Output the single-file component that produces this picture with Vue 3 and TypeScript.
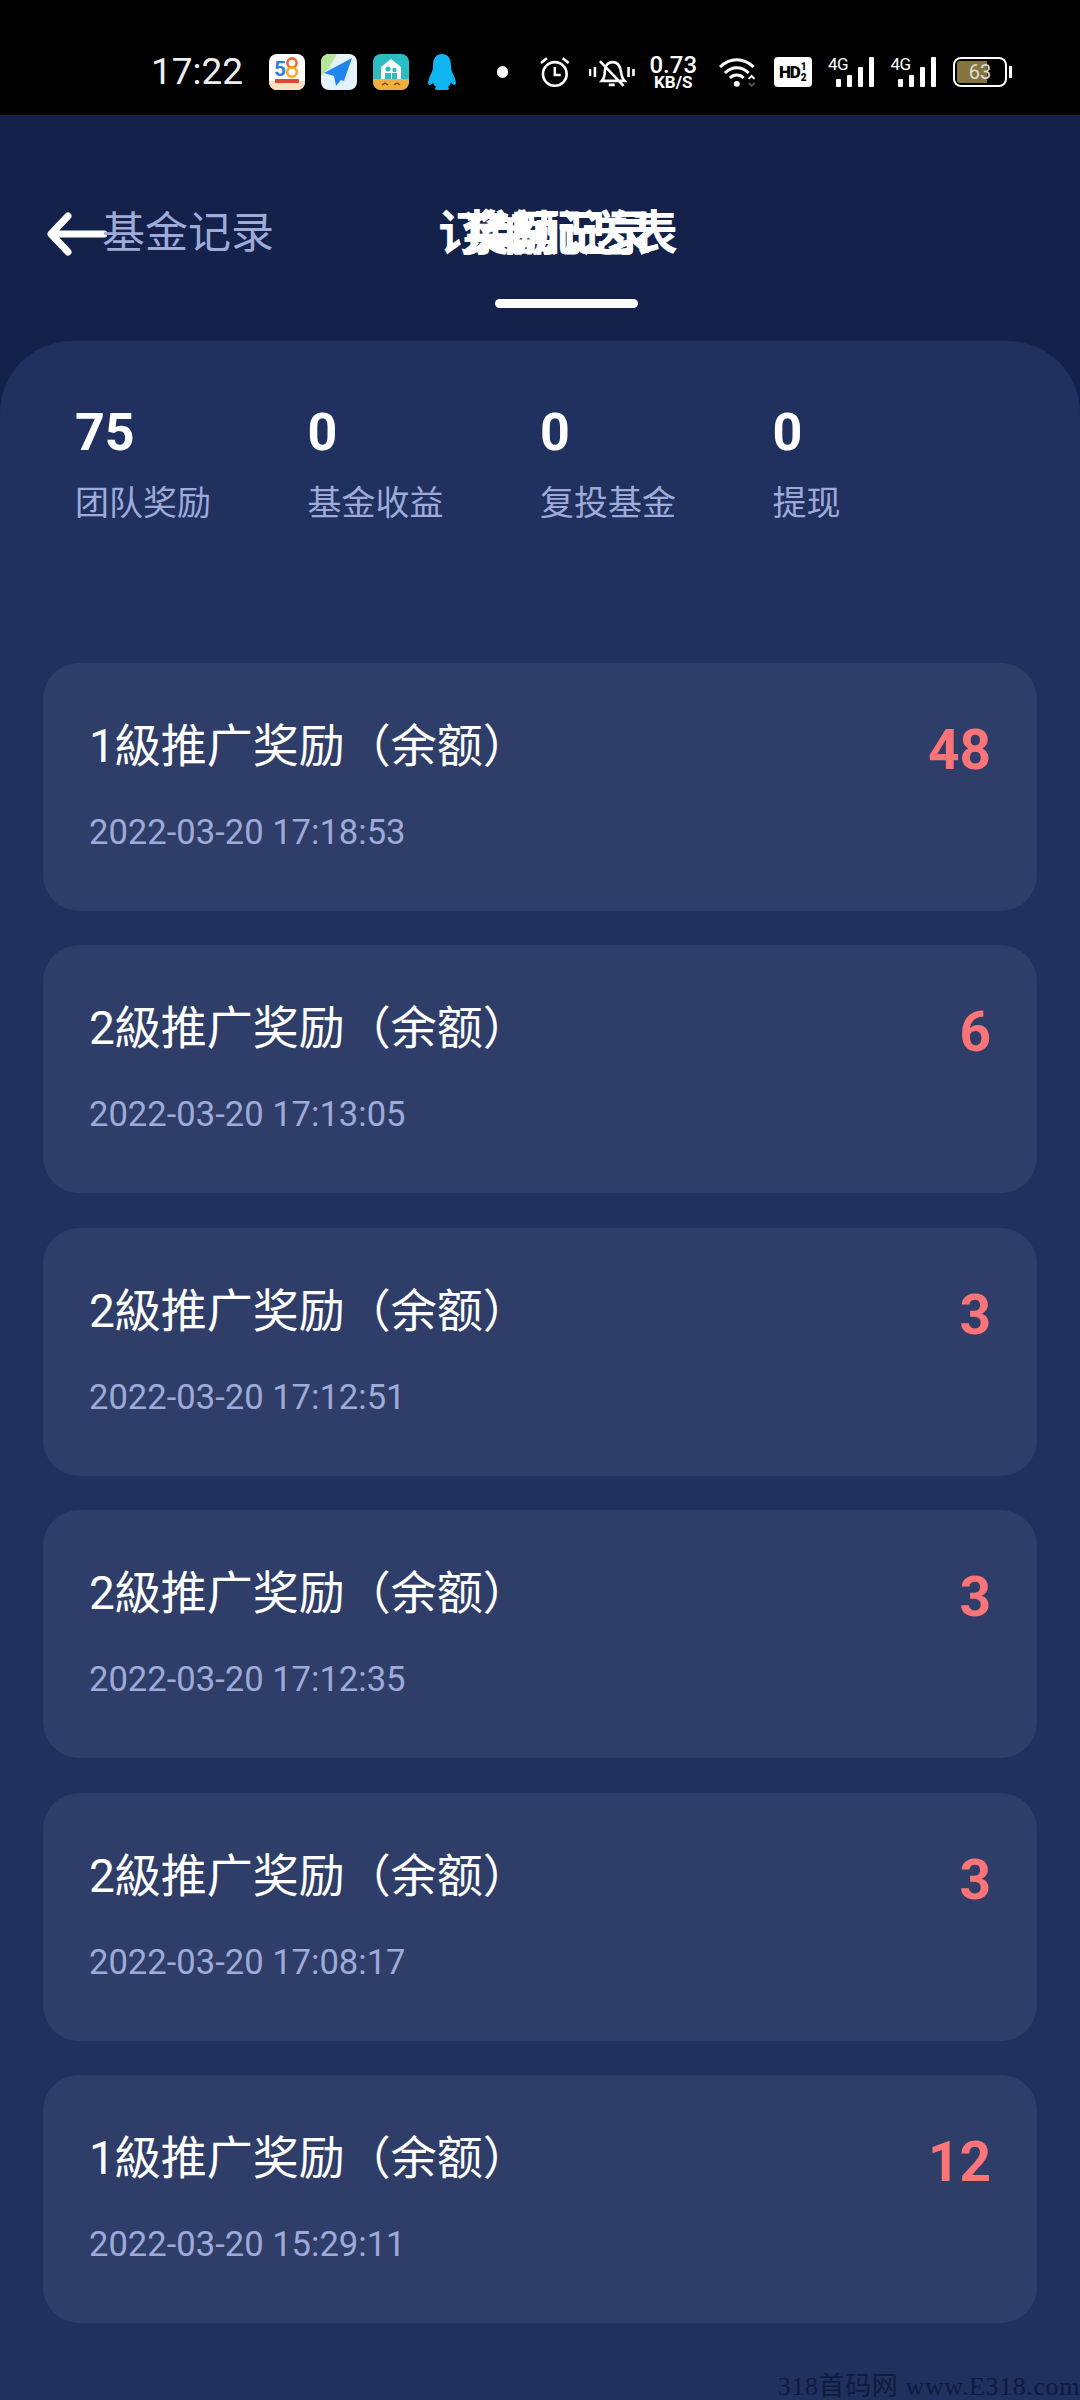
<script setup lang="ts">
const stats = [
  { v: '75', l: '团队奖励' },
  { v: '0', l: '基金收益' },
  { v: '0', l: '复投基金' },
  { v: '0', l: '提现' },
]
const rows = [
  { t: '1級推广奖励（余额）', d: '2022-03-20 17:18:53', n: '48' },
  { t: '2級推广奖励（余额）', d: '2022-03-20 17:13:05', n: '6' },
  { t: '2級推广奖励（余额）', d: '2022-03-20 17:12:51', n: '3' },
  { t: '2級推广奖励（余额）', d: '2022-03-20 17:12:35', n: '3' },
  { t: '2級推广奖励（余额）', d: '2022-03-20 17:08:17', n: '3' },
  { t: '1級推广奖励（余额）', d: '2022-03-20 15:29:11', n: '12' },
]
const signals = [0, 1]
</script>

<template>
  <div class="page">
    <div class="status">
      <span class="time">17:22</span>
      <div class="apps">
        <svg class="app" viewBox="0 0 36 36">
          <rect width="36" height="36" rx="8" fill="#fff" />
          <path d="M0 27h36v1a8 8 0 0 1-8 8H8a8 8 0 0 1-8-8z" fill="#f8e2bd" />
          <text x="5" y="22" font-size="21" font-weight="700" fill="#2f7fd0" font-family="Roboto">5</text>
          <circle cx="23" cy="9" r="4.6" fill="none" stroke="#ef6a2e" stroke-width="2.6" />
          <circle cx="23" cy="18" r="4.8" fill="none" stroke="#f5a81f" stroke-width="2.6" />
          <rect x="6" y="25" width="24" height="4" rx="1" fill="#d8492e" />
        </svg>
        <svg class="app" viewBox="0 0 36 36">
          <rect width="36" height="36" rx="8" fill="#e4f2fa" />
          <path d="M0 22V8a8 8 0 0 1 8-8h8L8 14z" fill="#b4e59a" />
          <path d="M31 4 3 19l10 3 2 10 5-6 3 1z" fill="#1f86ee" />
        </svg>
        <svg class="app" viewBox="0 0 36 36">
          <rect width="36" height="36" rx="8" fill="#2cbcc4" />
          <path d="M0 25h36v3a8 8 0 0 1-8 8H8a8 8 0 0 1-8-8z" fill="#f2ae3f" />
          <path d="M18 5 8 13v12h20V13z" fill="#fff" />
          <circle cx="15" cy="15" r="2.6" fill="#2cbcc4" />
          <circle cx="21.500" cy="16" r="2.2" fill="#2cbcc4" />
          <path d="M12 25v-6h6v6zM19 25v-6h5v6z" fill="#2cbcc4" />
          <path d="M9 31l3-2 3 2M21 31l3-2 3 2" stroke="#6a4a18" stroke-width="1.4" fill="none" />
        </svg>
        <svg class="qq" viewBox="0 0 30 36">
          <path d="M15 0C8 0 6 6 6 12c0 4-1 6-3 10-2 5-3 9 0 9l3-2c1 2 2 3 3 4-2 1-1 3 2 3h8c3 0 4-2 2-3 1-1 2-2 3-4l3 2c3 0 2-4 0-9-2-4-3-6-3-10 0-6-2-12-9-12z" fill="#10b6f2" />
        </svg>
      </div>
      <span class="dot"></span>
      <svg class="alarm" viewBox="0 0 32 32">
        <circle cx="16" cy="18" r="12" fill="none" stroke="#fff" stroke-width="2.6" />
        <path d="M16 11v8h6M2 7l6-5M30 7l-6-5" fill="none" stroke="#fff" stroke-width="2.6" />
      </svg>
      <svg class="mute" viewBox="0 0 46 32">
        <path d="M1 13v7M6 11v10M40 11v10M45 13v7" stroke="#fff" stroke-width="2.6" fill="none" />
        <path d="M13 25c3-3 3-6 3-10 0-5 3-9 8-9s7 3 8 8c1 5 1 8 4 11zM20 29h6M11 5l24 25" stroke="#fff" stroke-width="2.6" fill="none" />
      </svg>
      <div class="speed"><span>0.73</span><small>KB/S</small></div>
      <svg class="wifi" viewBox="0 0 40 32">
        <path d="M2 11c10-10 24-10 34 0M7 17c7-7 17-7 24 0M12 22c4-4 10-4 14 0" stroke="#fff" stroke-width="3" fill="none" />
        <circle cx="19" cy="28" r="3" fill="#fff" />
        <path d="M31 23l3-3 3 3" stroke="#fff" stroke-width="2" fill="none" />
        <path d="M31 27l3 3 3-3" stroke="#555" stroke-width="2" fill="none" />
      </svg>
      <div class="hd"><b>HD</b><i><span>1</span><span>2</span></i></div>
      <div v-for="s in signals" :key="s" class="signal">
        <span class="g">4G</span>
        <div class="bars"><i class="b1"></i><i class="b2"></i><i class="b3"></i><i class="b4"></i></div>
      </div>
      <div class="battery"><div class="shell"><div class="fill"></div><span>63</span></div><i></i></div>
    </div>

    <div class="head">
      <svg class="back" viewBox="0 0 60 48">
        <path d="M57 24H5M21 6 4 24l17 18" fill="none" stroke="#fff" stroke-width="7" stroke-linecap="round" stroke-linejoin="round" />
      </svg>
      <span class="side">基金记录</span>
      <div class="title">
        <span class="layer">订单配送表</span>
        <span class="layer">奖励记录</span>
        <span class="layer">余额记录</span>
      </div>
      <i class="line"></i>
    </div>

    <div class="panel">
      <div class="stats">
        <div v-for="s in stats" :key="s.l" class="stat">
          <b>{{ s.v }}</b><span>{{ s.l }}</span>
        </div>
      </div>
      <div class="list">
        <div v-for="(r, i) in rows" :key="i" class="card">
          <div>
            <div class="t">{{ r.t }}</div>
            <div class="d">{{ r.d }}</div>
          </div>
          <div class="n">{{ r.n }}</div>
        </div>
      </div>
    </div>
    <div class="mark">318首码网 www.E318.com</div>
  </div>
</template>

<style>
body { margin: 0; background: #20305f; }
</style>

<style scoped>
.page { position: relative; width: 1080px; height: 2400px; overflow: hidden; font-family: Roboto, "Noto Sans CJK SC", sans-serif; background: #13214b; }
.status { height: 115px; background: #000; color: #fff; display: flex; align-items: center; box-sizing: border-box; padding: 28px 68px 0 151px; }
.time { font-size: 37px; width: 119px; color: #eee; }
.apps { display: flex; align-items: center; gap: 16px; }
.app { width: 36px; height: 36px; }
.qq { width: 30px; height: 36px; margin-left: 2px; }
.dot { width: 12px; height: 12px; border-radius: 50%; background: #fff; margin: 0 31px 0 40px; }
.alarm { width: 32px; height: 32px; margin-right: 18px; }
.mute { width: 46px; height: 32px; margin-right: 14px; }
.speed { display: flex; flex-direction: column; align-items: center; line-height: 1; width: 50px; margin-right: 20px; }
.speed span { font-size: 24px; font-weight: 500; }
.speed small { font-size: 17px; font-weight: 700; margin-top: -3px; }
.wifi { width: 40px; height: 32px; margin-right: 16px; }
.hd { display: flex; align-items: center; justify-content: center; width: 39px; height: 30px; background: #fff; border-radius: 4px; color: #000; margin-right: 16px; }
.hd b { font-size: 17px; letter-spacing: -1px; font-weight: 900; }
.hd i { display: flex; flex-direction: column; font-style: normal; font-size: 10px; font-weight: 900; line-height: 11px; margin-left: 1px; }
.signal { position: relative; width: 46px; height: 30px; margin-right: 17px; }
.g { position: absolute; left: 0; top: -3px; font-size: 17px; line-height: 20px; letter-spacing: -0.5px; }
.bars { position: absolute; right: 0; bottom: 0; display: flex; align-items: flex-end; gap: 6px; }
.bars i { width: 5px; background: #fff; border-radius: 1px; }
.b1 { height: 8px; } .b2 { height: 12px; } .b3 { height: 20px; } .b4 { height: 30px; }
.battery { display: flex; align-items: center; }
.shell { position: relative; width: 54px; height: 30px; box-sizing: border-box; border: 2px solid #fff; border-radius: 8px; overflow: hidden; text-align: center; }
.fill { position: absolute; inset: 2px 18px 2px 2px; background: #85743e; border-radius: 3px 0 0 3px; }
.shell span { position: relative; font-size: 20px; line-height: 26px; display: block; color: #ddd; }
.battery i { width: 3px; height: 12px; background: #fff; margin-left: 2px; }

.head { position: relative; height: 226px; background: #13214b; }
.back { position: absolute; left: 47px; top: 95px; width: 60px; height: 48px; }
.side { position: absolute; left: 102px; top: 92px; font-size: 43px; line-height: 52px; color: #9eaad8; white-space: nowrap; }
.title { position: absolute; left: 438px; top: 91px; width: 240px; height: 56px; }
.layer { position: absolute; left: 0; top: 0; width: 100%; text-align: center; font-size: 48px; line-height: 56px; color: #fff; font-weight: 700; white-space: nowrap; }
.line { position: absolute; left: 495px; top: 184px; width: 143px; height: 9px; border-radius: 5px; background: #fff; }

.panel { background: #20305f; height: 2059px; border-radius: 72px 72px 0 0; box-sizing: border-box; padding-top: 61px; }
.stats { display: flex; padding-left: 75px; }
.stat { width: 232.5px; display: flex; flex-direction: column; color: #9eaad8; font-size: 34px; }
.stat b { color: #fff; font-size: 52px; line-height: 62px; font-weight: 700; }
.stat span { line-height: 46px; margin-top: 16px; margin-left: 0; }
.list { margin: 137px 43px 0; display: flex; flex-direction: column; gap: 34.4px; }
.card { height: 248px; background: #2f3e68; border-radius: 36px; display: flex; justify-content: space-between; padding: 53px 46px 0; box-sizing: border-box; }
.t { color: #fff; font-size: 46px; line-height: 60px; }
.d { color: #9eaad8; font-size: 34.6px; line-height: 44px; margin-top: 34px; }
.n { color: #fb7478; font-size: 55px; font-weight: 700; line-height: 70px; margin-top: -1px; }
.mark { position: absolute; right: 0; bottom: 0; font-family: "Liberation Serif", "Noto Sans CJK SC", serif; font-size: 26px; line-height: 26px; letter-spacing: 0.6px; color: #111a3e; white-space: nowrap; }
</style>
